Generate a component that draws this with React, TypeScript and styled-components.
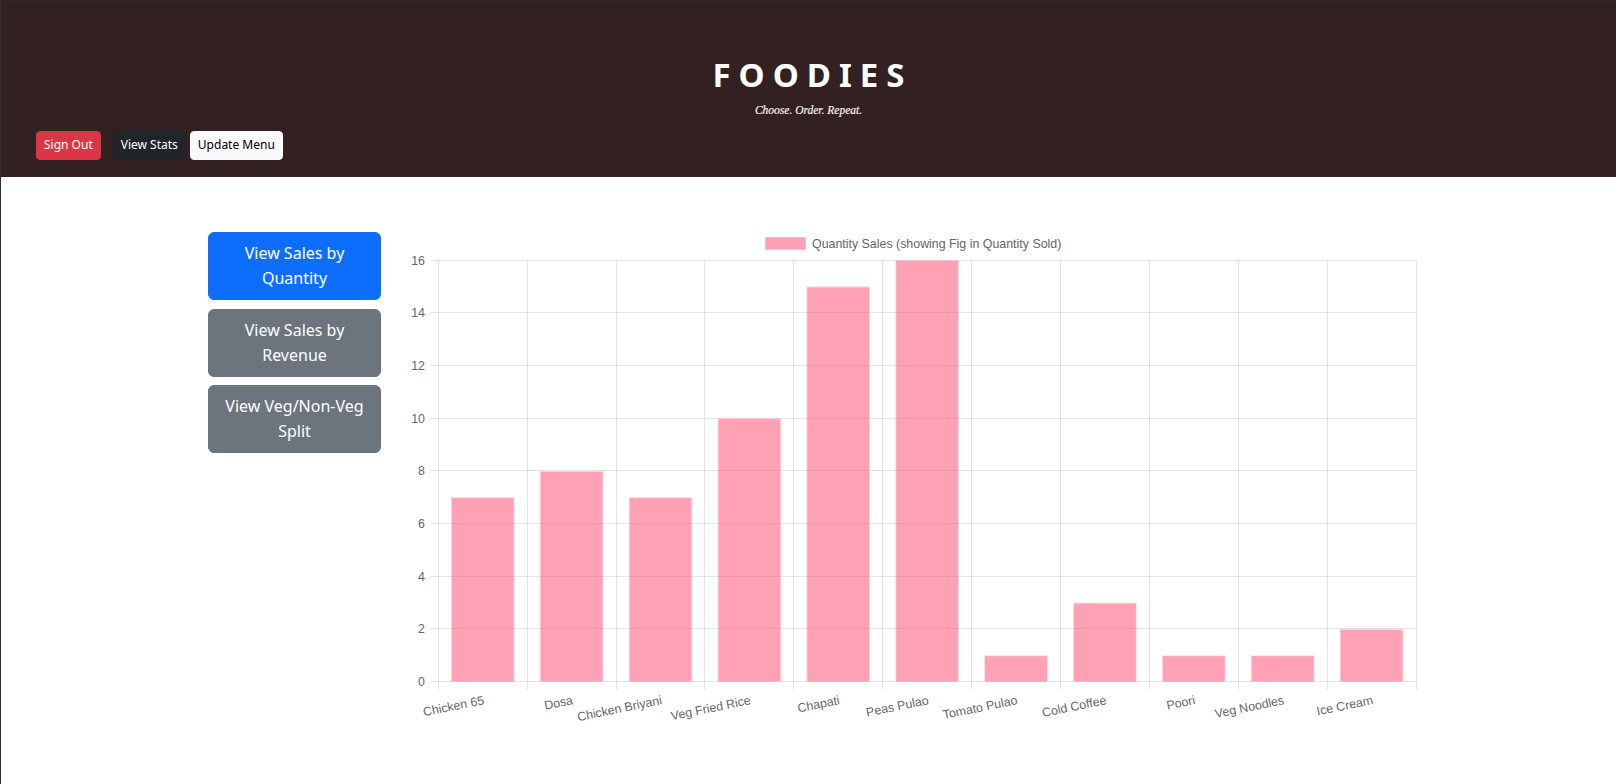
import React from "react";
import styled, { createGlobalStyle } from "styled-components";

const GlobalStyle = createGlobalStyle`
  html, body { margin: 0; padding: 0; background: #ffffff; }
  body { font-family: "Noto Sans", "Open Sans", sans-serif; }
  *, *::before, *::after { box-sizing: border-box; }
`;

const Page = styled.div`
  min-height: 784px;
  border-top: 1px solid #2b2b2b;
  border-left: 1px solid #2f2f2f;
  background: #ffffff;
`;

const Header = styled.header`
  height: 176px;
  background: #332020;
  display: flex;
  flex-direction: column;
  padding-top: 54px;
`;

const Brand = styled.div`
  display: flex;
  flex-direction: column;
  align-items: center;
`;

const Title = styled.h1`
  margin: 0;
  padding-left: 8px;
  font: 700 33px/40px "Noto Sans", "Open Sans", sans-serif;
  letter-spacing: 8px;
  color: #ffffff;
`;

const Tagline = styled.p`
  margin: 8px 0 0;
  font: italic 400 11.5px/14px "Liberation Serif", "DejaVu Serif", serif;
  color: #f2f2f2;
  -webkit-text-stroke: 0.2px #f2f2f2;
`;

const Toolbar = styled.div`
  display: flex;
  gap: 4px;
  margin-top: 14px;
  padding-left: 35px;
`;

const tones = {
  danger: { bg: "#dc3545", fg: "#ffffff" },
  dark: { bg: "#212529", fg: "#ffffff" },
  light: { bg: "#f8f9fa", fg: "#000000" },
};

const HeaderButton = styled.button<{ $tone: keyof typeof tones; $spaceAfter?: number }>`
  font: 400 12px/18.5px "Noto Sans", "Open Sans", sans-serif;
  padding: 4px 7px;
  border-radius: 4px;
  border: 1px solid ${(p) => tones[p.$tone].bg};
  background: ${(p) => tones[p.$tone].bg};
  color: ${(p) => tones[p.$tone].fg};
  margin-right: ${(p) => p.$spaceAfter ?? 0}px;
  cursor: pointer;
`;

const Main = styled.main`
  display: flex;
  align-items: flex-start;
  gap: 10px;
  padding: 55px 0 0 207px;
`;

const SideNav = styled.nav`
  width: 173px;
  display: flex;
  flex-direction: column;
  gap: 8.5px;
`;

const SideButton = styled.button<{ $active?: boolean }>`
  width: 100%;
  padding: 8px 12px;
  border-radius: 6px;
  border: 1px solid ${(p) => (p.$active ? "#0d6efd" : "#6c757d")};
  background: ${(p) => (p.$active ? "#0d6efd" : "#6c757d")};
  color: #ffffff;
  font: 400 16px/25px "Noto Sans", "Open Sans", sans-serif;
  text-align: center;
  cursor: pointer;
`;

const ChartBox = styled.div`
  width: 1040px;
  height: 500px;
`;

const data: [string, number][] = [
  ["Chicken 65", 7],
  ["Dosa", 8],
  ["Chicken Briyani", 7],
  ["Veg Fried Rice", 10],
  ["Chapati", 15],
  ["Peas Pulao", 16],
  ["Tomato Pulao", 1],
  ["Cold Coffee", 3],
  ["Poori", 1],
  ["Veg Noodles", 1],
  ["Ice Cream", 2],
];

const X0 = 47.3;
const X1 = 1025;
const Y0 = 28;
const Y1 = 449.5;
const MAXV = 16;
const CW = (X1 - X0) / data.length;
const UNIT = (Y1 - Y0) / MAXV;
const crisp = (v: number) => Math.round(v - 0.5) + 0.5;
const FONT = `"Liberation Sans", Arial, Helvetica, sans-serif`;
const FS = 12.4;

function SalesChart() {
  const yTicks = Array.from({ length: 9 }, (_, k) => k * 2);
  const xLines = Array.from({ length: data.length + 1 }, (_, i) => X0 + i * CW);
  const barW = CW * 0.72;
  return (
    <svg width={1040} height={500} viewBox="0 0 1040 500">
      {/* legend */}
      <rect x={374.5} y={5.5} width={40} height={12} fill="rgba(255,99,132,0.6)" stroke="rgba(255,99,132,0.2)" strokeWidth={1} />
      <text x={421} y={15.5} fontFamily={FONT} fontSize={FS} fill="#666">
        Quantity Sales (showing Fig in Quantity Sold)
      </text>

      {/* horizontal grid */}
      {yTicks.map((v) => {
        const y = crisp(Y1 - v * UNIT);
        return (
          <g key={`h${v}`}>
            <line x1={X0 - 8} x2={X1} y1={y} y2={y} stroke="rgba(0,0,0,0.1)" strokeWidth={1} />
            <text x={34} y={y + 4.3} textAnchor="end" fontFamily={FONT} fontSize={FS} fill="#666">
              {v}
            </text>
          </g>
        );
      })}

      {/* vertical grid */}
      {xLines.map((x, i) => (
        <line key={`v${i}`} x1={crisp(x)} x2={crisp(x)} y1={Y0} y2={Y1 + 8} stroke="rgba(0,0,0,0.1)" strokeWidth={1} />
      ))}

      {/* bars */}
      {data.map(([label, v], i) => {
        const cx = X0 + (i + 0.5) * CW;
        const x = cx - barW / 2;
        const h = v * UNIT;
        const y = Y1 - h;
        const ring = `M${x},${Y1} L${x},${y} L${x + barW},${y} L${x + barW},${Y1} Z M${x + 1},${Y1} L${x + barW - 1},${Y1} L${x + barW - 1},${y + 1} L${x + 1},${y + 1} Z`;
        return (
          <g key={label}>
            <rect x={x + 1} y={y + 1} width={barW - 2} height={h - 1} fill="rgba(255,99,132,0.6)" />
            <path d={ring} fill="rgba(255,99,132,0.2)" fillRule="evenodd" />
          </g>
        );
      })}

      {/* x labels */}
      {data.map(([label], i) => {
        const cx = X0 + (i + 0.5) * CW + 2;
        const by = 472;
        return (
          <text
            key={`l${label}`}
            x={cx}
            y={by}
            textAnchor="end"
            fontFamily={FONT}
            fontSize={FS}
            fill="#666"
            transform={`rotate(-11.5 ${cx} ${by})`}
          >
            {label}
          </text>
        );
      })}
    </svg>
  );
}

export default function App() {
  return (
    <>
      <GlobalStyle />
      <Page>
        <Header>
          <Brand>
            <Title>FOODIES</Title>
            <Tagline>Choose. Order. Repeat.</Tagline>
          </Brand>
          <Toolbar>
            <HeaderButton $tone="danger" $spaceAfter={8}>Sign Out</HeaderButton>
            <HeaderButton $tone="dark">View Stats</HeaderButton>
            <HeaderButton $tone="light">Update Menu</HeaderButton>
          </Toolbar>
        </Header>
        <Main>
          <SideNav>
            <SideButton $active>View Sales by Quantity</SideButton>
            <SideButton>View Sales by Revenue</SideButton>
            <SideButton>View Veg/Non-Veg Split</SideButton>
          </SideNav>
          <ChartBox>
            <SalesChart />
          </ChartBox>
        </Main>
      </Page>
    </>
  );
}
